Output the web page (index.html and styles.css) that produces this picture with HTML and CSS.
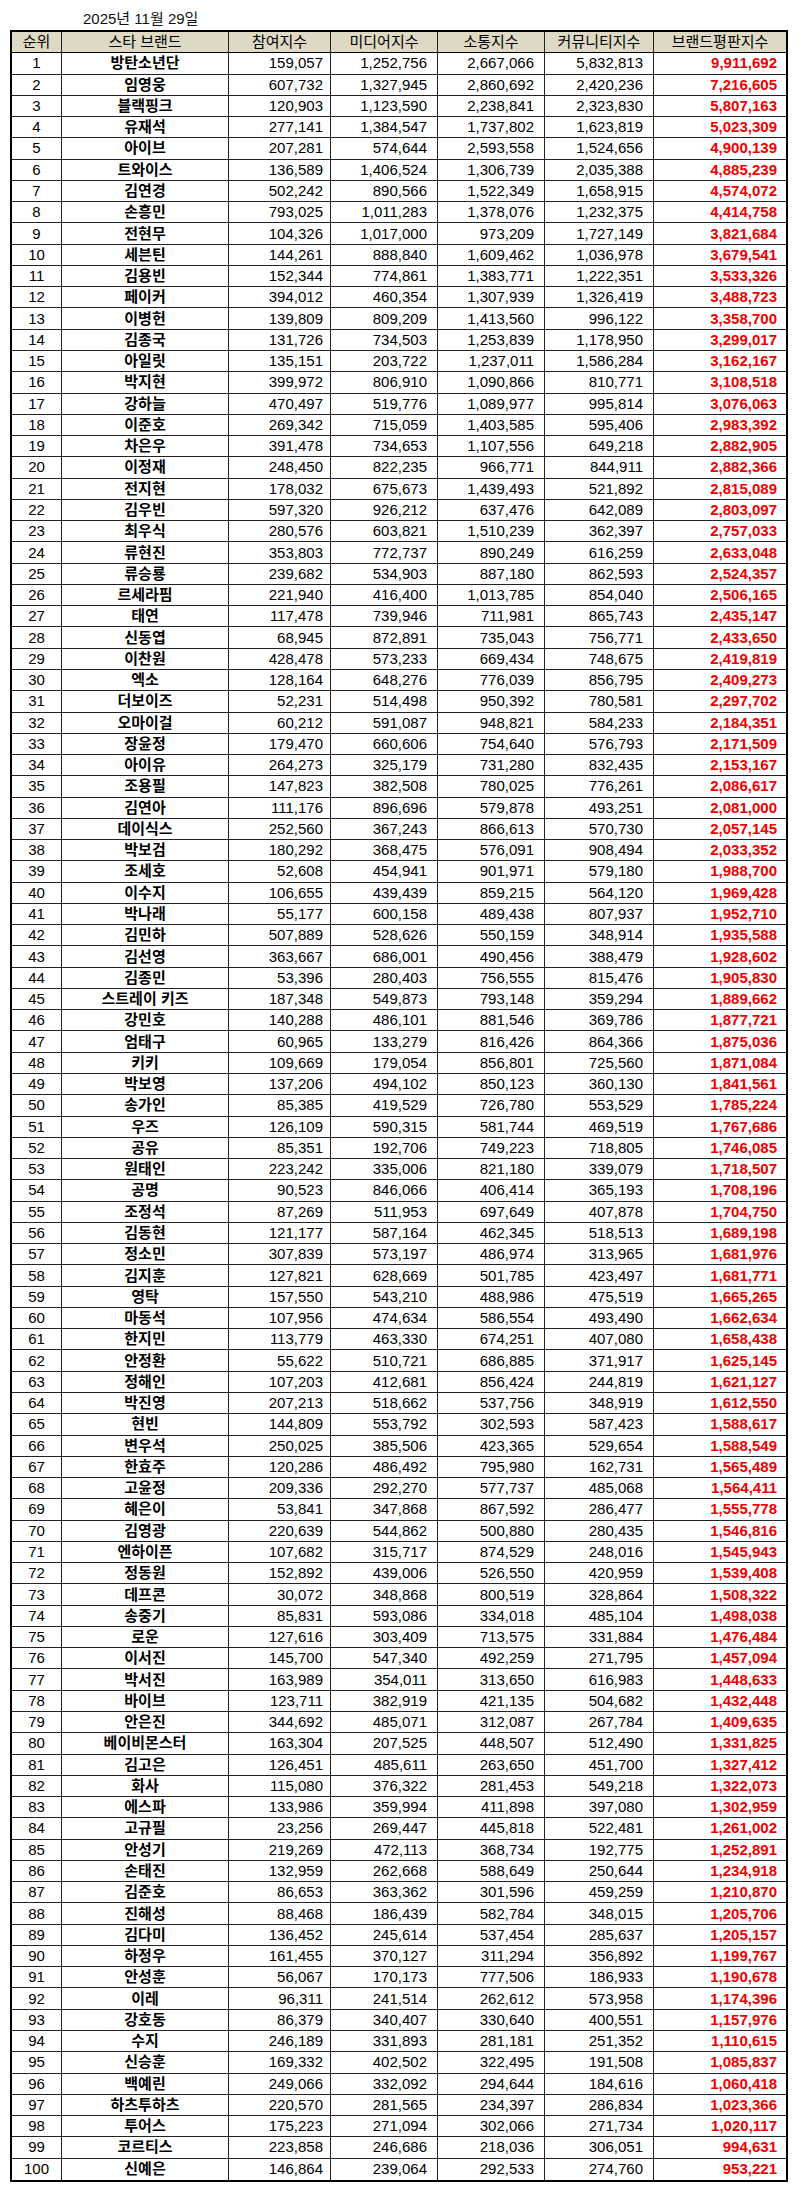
FILE: index.html
```html
<!DOCTYPE html>
<html lang="ko">
<head>
<meta charset="utf-8">
<title>스타 브랜드평판 2025년 11월 29일</title>
<link rel="stylesheet" href="styles.css">
</head>
<body>
<div class="date">2025년 11월 29일</div>
<table class="rank-table">
<thead>
<tr><th>순위</th><th>스타 브랜드</th><th>참여지수</th><th>미디어지수</th><th>소통지수</th><th>커뮤니티지수</th><th>브랜드평판지수</th></tr>
</thead>
<tbody>
<tr><td>1</td><td>방탄소년단</td><td>159,057</td><td>1,252,756</td><td>2,667,066</td><td>5,832,813</td><td>9,911,692</td></tr>
<tr><td>2</td><td>임영웅</td><td>607,732</td><td>1,327,945</td><td>2,860,692</td><td>2,420,236</td><td>7,216,605</td></tr>
<tr><td>3</td><td>블랙핑크</td><td>120,903</td><td>1,123,590</td><td>2,238,841</td><td>2,323,830</td><td>5,807,163</td></tr>
<tr><td>4</td><td>유재석</td><td>277,141</td><td>1,384,547</td><td>1,737,802</td><td>1,623,819</td><td>5,023,309</td></tr>
<tr><td>5</td><td>아이브</td><td>207,281</td><td>574,644</td><td>2,593,558</td><td>1,524,656</td><td>4,900,139</td></tr>
<tr><td>6</td><td>트와이스</td><td>136,589</td><td>1,406,524</td><td>1,306,739</td><td>2,035,388</td><td>4,885,239</td></tr>
<tr><td>7</td><td>김연경</td><td>502,242</td><td>890,566</td><td>1,522,349</td><td>1,658,915</td><td>4,574,072</td></tr>
<tr><td>8</td><td>손흥민</td><td>793,025</td><td>1,011,283</td><td>1,378,076</td><td>1,232,375</td><td>4,414,758</td></tr>
<tr><td>9</td><td>전현무</td><td>104,326</td><td>1,017,000</td><td>973,209</td><td>1,727,149</td><td>3,821,684</td></tr>
<tr><td>10</td><td>세븐틴</td><td>144,261</td><td>888,840</td><td>1,609,462</td><td>1,036,978</td><td>3,679,541</td></tr>
<tr><td>11</td><td>김용빈</td><td>152,344</td><td>774,861</td><td>1,383,771</td><td>1,222,351</td><td>3,533,326</td></tr>
<tr><td>12</td><td>페이커</td><td>394,012</td><td>460,354</td><td>1,307,939</td><td>1,326,419</td><td>3,488,723</td></tr>
<tr><td>13</td><td>이병헌</td><td>139,809</td><td>809,209</td><td>1,413,560</td><td>996,122</td><td>3,358,700</td></tr>
<tr><td>14</td><td>김종국</td><td>131,726</td><td>734,503</td><td>1,253,839</td><td>1,178,950</td><td>3,299,017</td></tr>
<tr><td>15</td><td>아일릿</td><td>135,151</td><td>203,722</td><td>1,237,011</td><td>1,586,284</td><td>3,162,167</td></tr>
<tr><td>16</td><td>박지현</td><td>399,972</td><td>806,910</td><td>1,090,866</td><td>810,771</td><td>3,108,518</td></tr>
<tr><td>17</td><td>강하늘</td><td>470,497</td><td>519,776</td><td>1,089,977</td><td>995,814</td><td>3,076,063</td></tr>
<tr><td>18</td><td>이준호</td><td>269,342</td><td>715,059</td><td>1,403,585</td><td>595,406</td><td>2,983,392</td></tr>
<tr><td>19</td><td>차은우</td><td>391,478</td><td>734,653</td><td>1,107,556</td><td>649,218</td><td>2,882,905</td></tr>
<tr><td>20</td><td>이정재</td><td>248,450</td><td>822,235</td><td>966,771</td><td>844,911</td><td>2,882,366</td></tr>
<tr><td>21</td><td>전지현</td><td>178,032</td><td>675,673</td><td>1,439,493</td><td>521,892</td><td>2,815,089</td></tr>
<tr><td>22</td><td>김우빈</td><td>597,320</td><td>926,212</td><td>637,476</td><td>642,089</td><td>2,803,097</td></tr>
<tr><td>23</td><td>최우식</td><td>280,576</td><td>603,821</td><td>1,510,239</td><td>362,397</td><td>2,757,033</td></tr>
<tr><td>24</td><td>류현진</td><td>353,803</td><td>772,737</td><td>890,249</td><td>616,259</td><td>2,633,048</td></tr>
<tr><td>25</td><td>류승룡</td><td>239,682</td><td>534,903</td><td>887,180</td><td>862,593</td><td>2,524,357</td></tr>
<tr><td>26</td><td>르세라핌</td><td>221,940</td><td>416,400</td><td>1,013,785</td><td>854,040</td><td>2,506,165</td></tr>
<tr><td>27</td><td>태연</td><td>117,478</td><td>739,946</td><td>711,981</td><td>865,743</td><td>2,435,147</td></tr>
<tr><td>28</td><td>신동엽</td><td>68,945</td><td>872,891</td><td>735,043</td><td>756,771</td><td>2,433,650</td></tr>
<tr><td>29</td><td>이찬원</td><td>428,478</td><td>573,233</td><td>669,434</td><td>748,675</td><td>2,419,819</td></tr>
<tr><td>30</td><td>엑소</td><td>128,164</td><td>648,276</td><td>776,039</td><td>856,795</td><td>2,409,273</td></tr>
<tr><td>31</td><td>더보이즈</td><td>52,231</td><td>514,498</td><td>950,392</td><td>780,581</td><td>2,297,702</td></tr>
<tr><td>32</td><td>오마이걸</td><td>60,212</td><td>591,087</td><td>948,821</td><td>584,233</td><td>2,184,351</td></tr>
<tr><td>33</td><td>장윤정</td><td>179,470</td><td>660,606</td><td>754,640</td><td>576,793</td><td>2,171,509</td></tr>
<tr><td>34</td><td>아이유</td><td>264,273</td><td>325,179</td><td>731,280</td><td>832,435</td><td>2,153,167</td></tr>
<tr><td>35</td><td>조용필</td><td>147,823</td><td>382,508</td><td>780,025</td><td>776,261</td><td>2,086,617</td></tr>
<tr><td>36</td><td>김연아</td><td>111,176</td><td>896,696</td><td>579,878</td><td>493,251</td><td>2,081,000</td></tr>
<tr><td>37</td><td>데이식스</td><td>252,560</td><td>367,243</td><td>866,613</td><td>570,730</td><td>2,057,145</td></tr>
<tr><td>38</td><td>박보검</td><td>180,292</td><td>368,475</td><td>576,091</td><td>908,494</td><td>2,033,352</td></tr>
<tr><td>39</td><td>조세호</td><td>52,608</td><td>454,941</td><td>901,971</td><td>579,180</td><td>1,988,700</td></tr>
<tr><td>40</td><td>이수지</td><td>106,655</td><td>439,439</td><td>859,215</td><td>564,120</td><td>1,969,428</td></tr>
<tr><td>41</td><td>박나래</td><td>55,177</td><td>600,158</td><td>489,438</td><td>807,937</td><td>1,952,710</td></tr>
<tr><td>42</td><td>김민하</td><td>507,889</td><td>528,626</td><td>550,159</td><td>348,914</td><td>1,935,588</td></tr>
<tr><td>43</td><td>김선영</td><td>363,667</td><td>686,001</td><td>490,456</td><td>388,479</td><td>1,928,602</td></tr>
<tr><td>44</td><td>김종민</td><td>53,396</td><td>280,403</td><td>756,555</td><td>815,476</td><td>1,905,830</td></tr>
<tr><td>45</td><td>스트레이 키즈</td><td>187,348</td><td>549,873</td><td>793,148</td><td>359,294</td><td>1,889,662</td></tr>
<tr><td>46</td><td>강민호</td><td>140,288</td><td>486,101</td><td>881,546</td><td>369,786</td><td>1,877,721</td></tr>
<tr><td>47</td><td>엄태구</td><td>60,965</td><td>133,279</td><td>816,426</td><td>864,366</td><td>1,875,036</td></tr>
<tr><td>48</td><td>키키</td><td>109,669</td><td>179,054</td><td>856,801</td><td>725,560</td><td>1,871,084</td></tr>
<tr><td>49</td><td>박보영</td><td>137,206</td><td>494,102</td><td>850,123</td><td>360,130</td><td>1,841,561</td></tr>
<tr><td>50</td><td>송가인</td><td>85,385</td><td>419,529</td><td>726,780</td><td>553,529</td><td>1,785,224</td></tr>
<tr><td>51</td><td>우즈</td><td>126,109</td><td>590,315</td><td>581,744</td><td>469,519</td><td>1,767,686</td></tr>
<tr><td>52</td><td>공유</td><td>85,351</td><td>192,706</td><td>749,223</td><td>718,805</td><td>1,746,085</td></tr>
<tr><td>53</td><td>원태인</td><td>223,242</td><td>335,006</td><td>821,180</td><td>339,079</td><td>1,718,507</td></tr>
<tr><td>54</td><td>공명</td><td>90,523</td><td>846,066</td><td>406,414</td><td>365,193</td><td>1,708,196</td></tr>
<tr><td>55</td><td>조정석</td><td>87,269</td><td>511,953</td><td>697,649</td><td>407,878</td><td>1,704,750</td></tr>
<tr><td>56</td><td>김동현</td><td>121,177</td><td>587,164</td><td>462,345</td><td>518,513</td><td>1,689,198</td></tr>
<tr><td>57</td><td>정소민</td><td>307,839</td><td>573,197</td><td>486,974</td><td>313,965</td><td>1,681,976</td></tr>
<tr><td>58</td><td>김지훈</td><td>127,821</td><td>628,669</td><td>501,785</td><td>423,497</td><td>1,681,771</td></tr>
<tr><td>59</td><td>영탁</td><td>157,550</td><td>543,210</td><td>488,986</td><td>475,519</td><td>1,665,265</td></tr>
<tr><td>60</td><td>마동석</td><td>107,956</td><td>474,634</td><td>586,554</td><td>493,490</td><td>1,662,634</td></tr>
<tr><td>61</td><td>한지민</td><td>113,779</td><td>463,330</td><td>674,251</td><td>407,080</td><td>1,658,438</td></tr>
<tr><td>62</td><td>안정환</td><td>55,622</td><td>510,721</td><td>686,885</td><td>371,917</td><td>1,625,145</td></tr>
<tr><td>63</td><td>정해인</td><td>107,203</td><td>412,681</td><td>856,424</td><td>244,819</td><td>1,621,127</td></tr>
<tr><td>64</td><td>박진영</td><td>207,213</td><td>518,662</td><td>537,756</td><td>348,919</td><td>1,612,550</td></tr>
<tr><td>65</td><td>현빈</td><td>144,809</td><td>553,792</td><td>302,593</td><td>587,423</td><td>1,588,617</td></tr>
<tr><td>66</td><td>변우석</td><td>250,025</td><td>385,506</td><td>423,365</td><td>529,654</td><td>1,588,549</td></tr>
<tr><td>67</td><td>한효주</td><td>120,286</td><td>486,492</td><td>795,980</td><td>162,731</td><td>1,565,489</td></tr>
<tr><td>68</td><td>고윤정</td><td>209,336</td><td>292,270</td><td>577,737</td><td>485,068</td><td>1,564,411</td></tr>
<tr><td>69</td><td>혜은이</td><td>53,841</td><td>347,868</td><td>867,592</td><td>286,477</td><td>1,555,778</td></tr>
<tr><td>70</td><td>김영광</td><td>220,639</td><td>544,862</td><td>500,880</td><td>280,435</td><td>1,546,816</td></tr>
<tr><td>71</td><td>엔하이픈</td><td>107,682</td><td>315,717</td><td>874,529</td><td>248,016</td><td>1,545,943</td></tr>
<tr><td>72</td><td>정동원</td><td>152,892</td><td>439,006</td><td>526,550</td><td>420,959</td><td>1,539,408</td></tr>
<tr><td>73</td><td>데프콘</td><td>30,072</td><td>348,868</td><td>800,519</td><td>328,864</td><td>1,508,322</td></tr>
<tr><td>74</td><td>송중기</td><td>85,831</td><td>593,086</td><td>334,018</td><td>485,104</td><td>1,498,038</td></tr>
<tr><td>75</td><td>로운</td><td>127,616</td><td>303,409</td><td>713,575</td><td>331,884</td><td>1,476,484</td></tr>
<tr><td>76</td><td>이서진</td><td>145,700</td><td>547,340</td><td>492,259</td><td>271,795</td><td>1,457,094</td></tr>
<tr><td>77</td><td>박서진</td><td>163,989</td><td>354,011</td><td>313,650</td><td>616,983</td><td>1,448,633</td></tr>
<tr><td>78</td><td>바이브</td><td>123,711</td><td>382,919</td><td>421,135</td><td>504,682</td><td>1,432,448</td></tr>
<tr><td>79</td><td>안은진</td><td>344,692</td><td>485,071</td><td>312,087</td><td>267,784</td><td>1,409,635</td></tr>
<tr><td>80</td><td>베이비몬스터</td><td>163,304</td><td>207,525</td><td>448,507</td><td>512,490</td><td>1,331,825</td></tr>
<tr><td>81</td><td>김고은</td><td>126,451</td><td>485,611</td><td>263,650</td><td>451,700</td><td>1,327,412</td></tr>
<tr><td>82</td><td>화사</td><td>115,080</td><td>376,322</td><td>281,453</td><td>549,218</td><td>1,322,073</td></tr>
<tr><td>83</td><td>에스파</td><td>133,986</td><td>359,994</td><td>411,898</td><td>397,080</td><td>1,302,959</td></tr>
<tr><td>84</td><td>고규필</td><td>23,256</td><td>269,447</td><td>445,818</td><td>522,481</td><td>1,261,002</td></tr>
<tr><td>85</td><td>안성기</td><td>219,269</td><td>472,113</td><td>368,734</td><td>192,775</td><td>1,252,891</td></tr>
<tr><td>86</td><td>손태진</td><td>132,959</td><td>262,668</td><td>588,649</td><td>250,644</td><td>1,234,918</td></tr>
<tr><td>87</td><td>김준호</td><td>86,653</td><td>363,362</td><td>301,596</td><td>459,259</td><td>1,210,870</td></tr>
<tr><td>88</td><td>진해성</td><td>88,468</td><td>186,439</td><td>582,784</td><td>348,015</td><td>1,205,706</td></tr>
<tr><td>89</td><td>김다미</td><td>136,452</td><td>245,614</td><td>537,454</td><td>285,637</td><td>1,205,157</td></tr>
<tr><td>90</td><td>하정우</td><td>161,455</td><td>370,127</td><td>311,294</td><td>356,892</td><td>1,199,767</td></tr>
<tr><td>91</td><td>안성훈</td><td>56,067</td><td>170,173</td><td>777,506</td><td>186,933</td><td>1,190,678</td></tr>
<tr><td>92</td><td>이레</td><td>96,311</td><td>241,514</td><td>262,612</td><td>573,958</td><td>1,174,396</td></tr>
<tr><td>93</td><td>강호동</td><td>86,379</td><td>340,407</td><td>330,640</td><td>400,551</td><td>1,157,976</td></tr>
<tr><td>94</td><td>수지</td><td>246,189</td><td>331,893</td><td>281,181</td><td>251,352</td><td>1,110,615</td></tr>
<tr><td>95</td><td>신승훈</td><td>169,332</td><td>402,502</td><td>322,495</td><td>191,508</td><td>1,085,837</td></tr>
<tr><td>96</td><td>백예린</td><td>249,066</td><td>332,092</td><td>294,644</td><td>184,616</td><td>1,060,418</td></tr>
<tr><td>97</td><td>하츠투하츠</td><td>220,570</td><td>281,565</td><td>234,397</td><td>286,834</td><td>1,023,366</td></tr>
<tr><td>98</td><td>투어스</td><td>175,223</td><td>271,094</td><td>302,066</td><td>271,734</td><td>1,020,117</td></tr>
<tr><td>99</td><td>코르티스</td><td>223,858</td><td>246,686</td><td>218,036</td><td>306,051</td><td>994,631</td></tr>
<tr><td>100</td><td>신예은</td><td>146,864</td><td>239,064</td><td>292,533</td><td>274,760</td><td>953,221</td></tr>
</tbody>
</table>
</body>
</html>
```

FILE: styles.css
```css
html, body {
  margin: 0;
  padding: 0;
  background: #ffffff;
}

body {
  font-family: "Liberation Sans", "Noto Sans CJK KR", sans-serif;
  font-size: 15px;
  color: #000000;
}

.date {
  height: 30px;
  box-sizing: border-box;
  padding: 9px 0 0 83px;
  line-height: 20px;
  font-size: 15px;
  color: #111111;
}

.rank-table {
  margin-left: 10px;
  width: 778px;
  box-sizing: border-box;
  table-layout: fixed;
  border-collapse: separate;
  border-spacing: 0;
  border: 2px solid #000000;
}

.rank-table tr {
  height: 21.27px;
}

.rank-table th,
.rank-table td {
  box-sizing: border-box;
  padding: 0;
  line-height: 20px;
  vertical-align: middle;
  white-space: nowrap;
  overflow: hidden;
  border-right: 1px solid #222222;
  border-bottom: 1px solid #222222;
}

.rank-table th:last-child,
.rank-table td:last-child {
  border-right: none;
}

.rank-table tbody tr:last-child td {
  border-bottom: none;
}

.rank-table th {
  background: #ddd9c4;
  font-weight: normal;
  text-align: center;
  border-bottom-color: #000000;
}

.rank-table th:nth-child(1) { width: 50px; }
.rank-table th:nth-child(2) { width: 167px; }
.rank-table th:nth-child(3) { width: 102px; }
.rank-table th:nth-child(4) { width: 107px; }
.rank-table th:nth-child(5) { width: 107px; }
.rank-table th:nth-child(6) { width: 109px; }
.rank-table th:nth-child(7) { width: 132px; }

.rank-table td:nth-child(1) {
  text-align: center;
}

.rank-table td:nth-child(2) {
  text-align: center;
  font-weight: bold;
}

.rank-table td:nth-child(3) {
  text-align: right;
  padding-right: 7px;
}

.rank-table td:nth-child(4),
.rank-table td:nth-child(5),
.rank-table td:nth-child(6) {
  text-align: right;
  padding-right: 10px;
}

.rank-table td:nth-child(7) {
  text-align: right;
  padding-right: 9px;
  font-weight: bold;
  color: #f00000;
}
```
